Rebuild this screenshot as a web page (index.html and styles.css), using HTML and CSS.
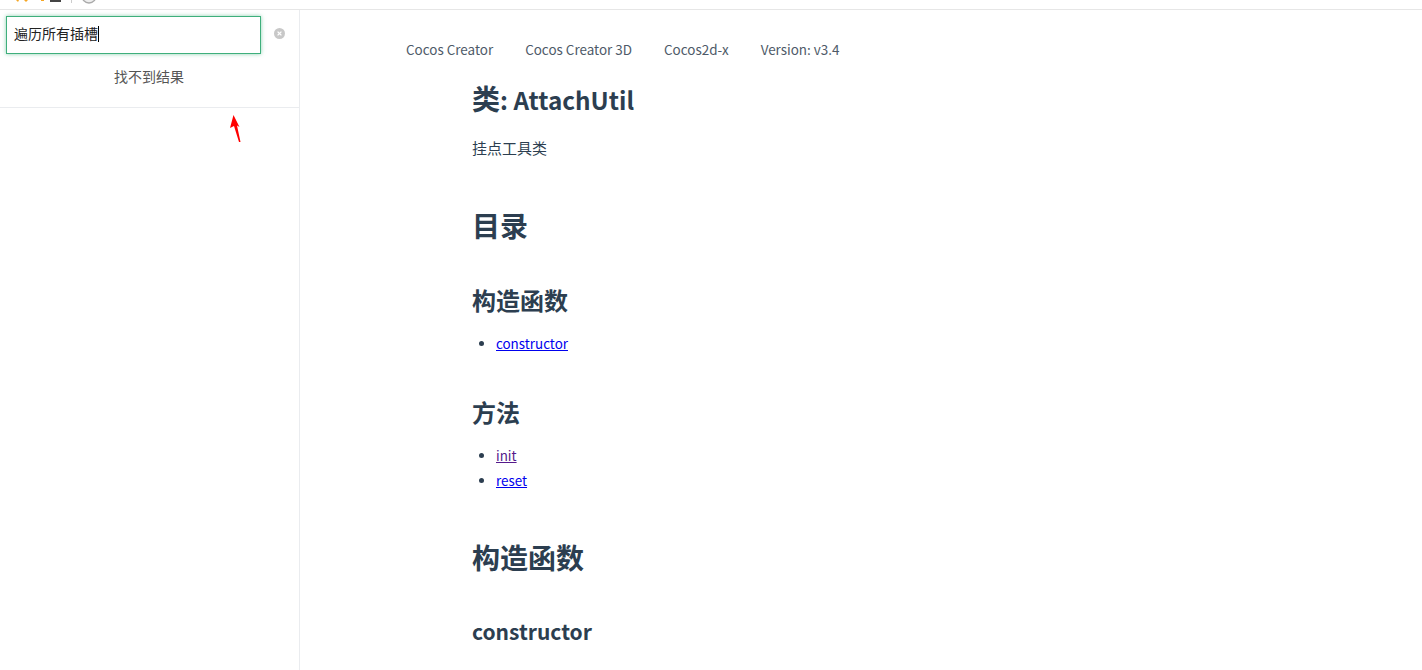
FILE: index.html
```html
<!DOCTYPE html>
<html lang="zh-CN">
<head>
  <meta charset="UTF-8" />
  <title>类: AttachUtil</title>
  <link rel="stylesheet" href="styles.css">
</head>
<body>
  <div class="topstrip">
    <svg class="strip-star" width="14" height="4" viewBox="0 0 14 4"><path d="M1 0 L3 2 L4 0 Z M9 0 L11 2 L13 0 Z" fill="#f5a623"/></svg>
    <span class="strip-dot"></span>
    <span class="strip-bar"></span>
    <span class="strip-sep"></span>
    <svg class="strip-circle" width="14" height="4" viewBox="0 0 14 4"><path d="M1 0 Q7 6 13 0" fill="#eee" stroke="#aaa" stroke-width="1.4"/></svg>
  </div>

  <div class="layout">
    <aside class="sidebar">
      <div class="search">
        <div class="search-row">
          <div class="search-input">遍历所有插槽<span class="caret"></span></div>
          <svg class="clear-icon" width="11" height="11" viewBox="0 0 11 11">
            <circle cx="5.5" cy="5.5" r="5.5" fill="#c8c8c8"/>
            <path d="M3.6 3.6 L7.4 7.4 M7.4 3.6 L3.6 7.4" stroke="#fff" stroke-width="1.3"/>
          </svg>
        </div>
        <div class="no-result">找不到结果</div>
      </div>
    </aside>

    <main class="content">
      <nav class="topnav">
        <a>Cocos Creator</a>
        <a>Cocos Creator 3D</a>
        <a>Cocos2d-x</a>
        <a>Version: v3.4</a>
      </nav>
      <article class="doc">
        <h2 class="title"><span class="cjk-big">类</span>: AttachUtil</h2>
        <p class="desc">挂点工具类</p>
        <h1>目录</h1>
        <h2 class="first">构造函数</h2>
        <ul>
          <li><a class="link" href="#constructor">constructor</a></li>
        </ul>
        <h2>方法</h2>
        <ul>
          <li><a class="link visited" href="#init">init</a></li>
          <li><a class="link" href="#reset">reset</a></li>
        </ul>
        <h1>构造函数</h1>
        <h2 class="latin">constructor</h2>
      </article>
    </main>
  </div>

  <svg class="arrow" width="11" height="28" viewBox="0 0 11 28">
    <path d="M3.5 0 L9.5 12 L7 10.5 L10.5 27 L9 27 L4 11 L0 13 Z" fill="#ff0000"/>
  </svg>
</body>
</html>
```

FILE: styles.css
```css
* {
  box-sizing: border-box;
}

html, body {
  height: 100%;
}

body {
  margin: 0;
  height: 670px;
  overflow: hidden;
  background: #fff;
  color: #2c3e50;
  font-family: "Noto Sans CJK SC", "Noto Sans", sans-serif;
  font-size: 15px;
}

.topstrip {
  display: flex;
  align-items: flex-start;
  height: 10px;
  border-bottom: 1px solid #e6e6e6;
  padding-left: 15px;
}

.strip-star {
  display: block;
}

.strip-dot {
  width: 3px;
  height: 1px;
  margin-left: 12px;
  background: #f5a623;
}

.strip-bar {
  width: 11px;
  height: 2px;
  margin-left: 6px;
  background: #444;
}

.strip-sep {
  width: 1px;
  height: 3px;
  margin-left: 10px;
  background: #ccc;
}

.strip-circle {
  display: block;
  margin-left: 10px;
}

.layout {
  display: flex;
  height: 660px;
}

.sidebar {
  flex: 0 0 300px;
  border-right: 1px solid #eaecef;
}

.search {
  height: 98px;
  padding: 6px 0 0 6px;
  border-bottom: 1px solid #eaecef;
}

.search-row {
  display: flex;
  align-items: center;
  gap: 13px;
}

.search-input {
  width: 255px;
  height: 38px;
  padding: 0 7px;
  border: 1px solid #3eaf7c;
  box-shadow: 0 0 4px rgba(62, 175, 124, 0.6);
  background: #fff;
  color: #222;
  font-size: 14px;
  line-height: 33px;
}

.caret {
  display: inline-block;
  width: 1px;
  height: 16px;
  background: #000;
  vertical-align: -3px;
}

.clear-icon {
  display: block;
  margin-bottom: 4px;
}

.no-result {
  margin-top: 12px;
  padding-right: 7px;
  text-align: center;
  font-size: 14px;
  line-height: 20px;
  color: #555;
}

.content {
  flex: 1;
  min-width: 0;
}

.topnav {
  display: flex;
  gap: 32px;
  padding: 29px 0 0 106px;
  font-size: 13.45px;
  line-height: 20px;
  color: #4e5a68;
}

.doc {
  padding: 0 0 0 172px;
}

.title {
  margin: 19px 0 0;
  font-size: 24.3px;
  line-height: 40px;
  font-weight: 600;
}

.cjk-big {
  font-size: 28px;
}

.desc {
  margin: 17px 0 44px;
  font-size: 15px;
  line-height: 22px;
}

h1 {
  margin: 42px 0 0;
  font-size: 28px;
  line-height: 44px;
  font-weight: 700;
}

h2 {
  margin: 38px 0 0;
  font-size: 24px;
  line-height: 36px;
  font-weight: 600;
}

h2.first {
  margin-top: 35px;
}

h2.latin {
  margin-top: 34px;
  font-size: 21px;
}

ul {
  margin: 13px 0 1px;
  padding-left: 7px;
  list-style: none;
  font-size: 13.4px;
  line-height: 25px;
}

li {
  display: flex;
  align-items: center;
  gap: 12px;
}

li::before {
  content: "";
  width: 5px;
  height: 5px;
  border-radius: 50%;
  background: #2c3e50;
}

.link {
  color: #0000ee;
  text-decoration: underline;
}

.link.visited {
  color: #551a8b;
}

.arrow {
  position: absolute;
  left: 230px;
  top: 115px;
}
```
